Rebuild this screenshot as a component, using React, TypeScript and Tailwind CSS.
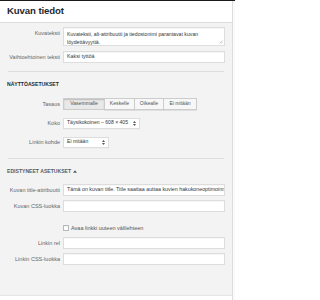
import React from "react";

const font = "font-['Liberation_Sans',Arial,sans-serif]";

function Label({ children }: { children: React.ReactNode }) {
  return (
    <div className="w-[56px] shrink-0 h-[12px] leading-[12px] text-right text-[5.5px] text-[#666] whitespace-nowrap">
      {children}
    </div>
  );
}

function TextInput({ value }: { value?: string }) {
  return (
    <div className="ml-[3px] w-[162px] h-[12px] bg-white border border-[#dddddd] shadow-[inset_0_0.5px_1px_rgba(0,0,0,0.07)] px-[3px] flex items-center text-[5.3px] text-[#32373c] whitespace-nowrap overflow-hidden">
      {value}
    </div>
  );
}

function Arrows() {
  return (
    <svg width="3" height="5" viewBox="0 0 6 10" className="shrink-0">
      <path d="M3 0 L6 4 L0 4 Z" fill="#555" />
      <path d="M3 10 L6 6 L0 6 Z" fill="#555" />
    </svg>
  );
}

function Select({ value, w }: { value: string; w: string }) {
  return (
    <div
      className={`ml-[3px] ${w} h-[11px] bg-white border border-[#dddddd] shadow-[0_0.5px_0_rgba(0,0,0,0.04)] pl-[3px] pr-[3px] flex items-center justify-between text-[5.1px] text-[#32373c] whitespace-nowrap`}
    >
      <span>{value}</span>
      <Arrows />
    </div>
  );
}

export default function App() {
  const btns = [
    { t: "Vasemmalle", w: "w-[42px]", active: true },
    { t: "Keskelle", w: "w-[31px]" },
    { t: "Oikealle", w: "w-[30px]" },
    { t: "Ei mitään", w: "w-[34px]" },
  ];
  return (
    <div className={`w-[235px] h-[300px] bg-white overflow-hidden ${font}`}>
      <div className="h-[1px] bg-[#1a1a1a]" />
      <div className="flex">
        <div className="w-[233px] shrink-0 border-r border-[#dddddd]">
          <div className="h-[22px] bg-white border-b border-[#dddddd] flex items-center pl-[7px] text-[9.6px] font-bold text-[#23282d] tracking-[-0.1px]">
            Kuvan tiedot
          </div>
          <div className="h-[272px] bg-[#f3f3f3] pl-[4px] pt-[4px] flex flex-col">
            <div className="flex items-start">
              <Label>Kuvateksti</Label>
              <div className="relative ml-[3px] w-[162px] h-[19px] bg-white border border-[#dddddd] shadow-[inset_0_0.5px_1px_rgba(0,0,0,0.07)] px-[3px] pt-[2px] text-[5.2px] leading-[8.2px] text-[#32373c]">
                Kuvateksti, alt-attribuutti ja tiedostonimi parantavat kuvan löydettävyyttä.
                <svg width="4" height="4" viewBox="0 0 8 8" className="absolute right-[1px] bottom-[1px]">
                  <path d="M7 1 L1 7 M7 4 L4 7" stroke="#999" strokeWidth="1" />
                </svg>
              </div>
            </div>
            <div className="flex items-start mt-[5px]">
              <Label>Vaihtoehtoinen teksti</Label>
              <TextInput value="Kaksi tyttöä" />
            </div>
            <div className="h-[1px] bg-[#dddddd] mt-[8px] ml-[4px] mr-[8px]" />

            <div className="mt-[9px] ml-[3px] h-[6px] leading-[6px] text-[5.1px] font-bold text-[#23282d] uppercase">
              Näyttöasetukset
            </div>

            <div className="flex items-start mt-[11px]">
              <Label>Tasaus</Label>
              <div className="ml-[3px] flex">
                {btns.map((b, i) => (
                  <div
                    key={b.t}
                    className={`${b.w} h-[12px] flex items-center justify-center text-[5.1px] text-[#555] border border-[#cccccc] ${i > 0 ? "-ml-[1px]" : ""} ${
                      b.active
                        ? "bg-[#e9e9e9] shadow-[inset_0_1px_1.5px_rgba(0,0,0,0.2)] z-10"
                        : "bg-[#f7f7f7] shadow-[0_0.5px_0_#cccccc]"
                    }`}
                  >
                    {b.t}
                  </div>
                ))}
              </div>
            </div>

            <div className="flex items-center mt-[7px]">
              <Label>Koko</Label>
              <Select value="Täysikokoinen – 608 × 405" w="w-[77px]" />
            </div>
            <div className="flex items-center mt-[7px]">
              <Label>Linkin kohde</Label>
              <Select value="Ei mitään" w="w-[46px]" />
            </div>

            <div className="h-[1px] bg-[#dddddd] mt-[10px] ml-[4px] mr-[8px]" />

            <div className="mt-[9px] ml-[3px] h-[6px] leading-[6px] text-[5.1px] font-bold text-[#555d66] uppercase flex items-center gap-[2px]">
              <span>Edistyneet asetukset</span>
              <svg width="4" height="3" viewBox="0 0 8 5">
                <path d="M4 0 L8 5 L0 5 Z" fill="#555d66" />
              </svg>
            </div>

            <div className="flex items-start mt-[10px]">
              <Label>Kuvan title-attribuutti</Label>
              <TextInput value="Tämä on kuvan title. Title saattaa auttaa kuvien hakukoneoptimoinnissa" />
            </div>
            <div className="flex items-start mt-[4px]">
              <Label>Kuvan CSS-luokka</Label>
              <TextInput />
            </div>

            <div className="flex items-center mt-[12px] ml-[59px]">
              <div className="w-[6px] h-[6px] bg-white border border-[#b4b9be] shadow-[inset_0_0.5px_1px_rgba(0,0,0,0.1)]" />
              <span className="ml-[2px] text-[5.5px] text-[#555]">Avaa linkki uuteen välilehteen</span>
            </div>

            <div className="flex items-start mt-[5px]">
              <Label>Linkin rel</Label>
              <TextInput />
            </div>
            <div className="flex items-start mt-[4px]">
              <Label>Linkin CSS-luokka</Label>
              <TextInput />
            </div>
          </div>
          <div className="h-[5px] bg-white border-t border-[#e5e5e5]" />
        </div>
        <div className="flex-1 bg-[#fafafa]" />
      </div>
    </div>
  );
}
